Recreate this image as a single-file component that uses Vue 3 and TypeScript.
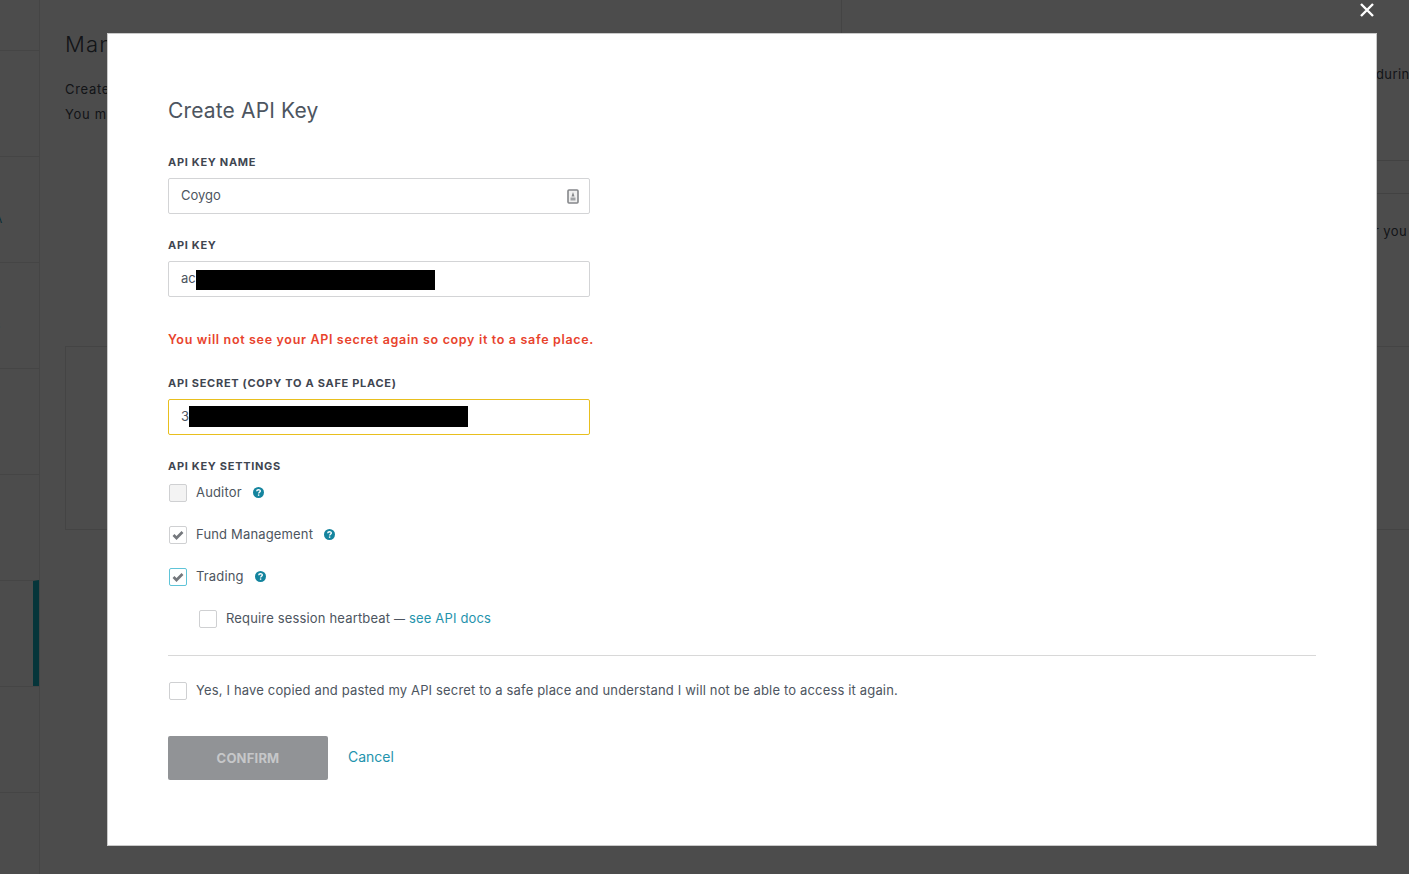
<script setup lang="ts">
const navRows: { id: number; text: string }[] = [
  { id: 1, text: '' },
  { id: 2, text: 'A' },
  { id: 3, text: 's' },
  { id: 4, text: '' },
  { id: 5, text: '' },
  { id: 6, text: '' },
  { id: 7, text: '' },
  { id: 8, text: '' },
];
interface Perm { label: string; checked: boolean; disabled?: boolean; focus?: boolean }
const perms: Perm[] = [
  { label: 'Auditor', checked: false, disabled: true },
  { label: 'Fund Management', checked: true },
  { label: 'Trading', checked: true, focus: true },
];
</script>

<template>
  <div class="page">
    <aside class="side">
      <div v-for="n in navRows" :key="n.id" class="side-row" :class="['row-' + n.id, { active: n.id === 6 }]">
        <span v-if="n.text" class="side-text">{{ n.text }}</span>
      </div>
    </aside>
    <main class="main">
      <h1 class="bg-title">Manage API Keys</h1>
      <p class="bg-line first">Create and manage API keys</p>
      <p class="bg-line">You may create several keys</p>
      <i class="bg-divider"></i>
      <span class="bg-right">during</span>
      <div class="bg-rules"><span class="bg-you">for you</span></div>
      <div class="bg-card"></div>
    </main>
  </div>

  <div class="overlay">
    <button class="close" aria-label="Close">
      <svg width="16" height="16" viewBox="0 0 16 16"><path d="M2 2 L14 14 M14 2 L2 14" stroke="#fff" stroke-width="2.4" fill="none" /></svg>
    </button>
    <section class="modal">
      <h2 class="title">Create API Key</h2>

      <label class="label">API KEY NAME</label>
      <div class="input">
        <span class="value">Coygo</span>
        <svg class="key-icon" width="12" height="15" viewBox="0 0 12 15">
          <rect x="1" y="1" width="10" height="13" rx="1" fill="#f0f0f0" stroke="#85878a" stroke-width="1.6" />
          <path d="M6 3 L7.5 7.5 H4.5 Z" fill="#85878a" />
          <rect x="3.5" y="8.5" width="5" height="3" fill="#a0a2a5" />
        </svg>
      </div>

      <label class="label second">API KEY</label>
      <div class="input">
        <span class="value">ac</span>
        <i class="redact redact-key"></i>
      </div>

      <p class="warning">You will not see your API secret again so copy it to a safe place.</p>

      <label class="label third">API SECRET (COPY TO A SAFE PLACE)</label>
      <div class="input secret">
        <span class="value">3</span>
        <i class="redact redact-secret"></i>
      </div>

      <label class="label fourth">API KEY SETTINGS</label>
      <div class="perms">
        <div v-for="p in perms" :key="p.label" class="check-row">
          <span class="box" :class="{ disabled: p.disabled, focus: p.focus }">
            <svg v-if="p.checked" width="12" height="10" viewBox="0 0 12 10"><path d="M1.5 5 L4.5 8 L10.5 2" stroke="#75787d" stroke-width="2.7" fill="none" /></svg>
          </span>
          <span class="check-text">{{ p.label }}</span>
          <svg class="help" width="11" height="11" viewBox="0 0 11 11">
            <circle cx="5.5" cy="5.5" r="5.5" fill="#14849e" />
            <path d="M3.7 4.2 C3.8 2.2 7.3 2.2 7.3 4.1 C7.3 5.3 5.6 5.3 5.6 6.6" stroke="#fff" stroke-width="1.4" fill="none" />
            <rect x="4.9" y="7.4" width="1.4" height="1.4" fill="#fff" />
          </svg>
        </div>
        <div class="check-row sub">
          <span class="box"></span>
          <span class="check-text">Require session heartbeat <span class="dash">—</span> <a class="link">see API docs</a></span>
        </div>
      </div>

      <hr class="sep" />

      <div class="check-row confirm-row">
        <span class="box"></span>
        <span class="check-text">Yes, I have copied and pasted my API secret to a safe place and understand I will not be able to access it again.</span>
      </div>

      <div class="actions">
        <button class="confirm">CONFIRM</button>
        <a class="link cancel">Cancel</a>
      </div>
    </section>
  </div>
</template>

<style>
html, body { margin: 0; height: 100%; overflow: hidden; }
</style>

<style scoped>
.page {
  display: flex;
  width: 1409px;
  height: 874px;
  overflow: hidden;
  background: #fff;
  font-family: Inter, "Liberation Sans", sans-serif;
  color: #3f4651;
}
.side {
  width: 39px;
  flex: none;
  padding-top: 50px;
  border-right: 1px solid #e8e8e8;
  overflow: hidden;
}
.side-row {
  height: 105px;
  border-top: 1px solid #e6e6e6;
  box-sizing: content-box;
}
.side-row.active { border-right: 6px solid #15b3c4; }
.side-text { display: block; margin-left: -6px; font-size: 12px; line-height: 14px; }
.row-2 .side-text { padding-top: 55px; color: #1f93ad; }
.row-3 .side-text { padding-top: 55px; }
.main { flex: 1; padding: 30px 0 0 25px; position: relative; }
.bg-title { margin: 0; font-size: 22px; line-height: 28px; font-weight: 300; letter-spacing: 1.2px; white-space: nowrap; }
.bg-line { margin: 0; font-size: 13px; line-height: 25px; white-space: nowrap; letter-spacing: 0.7px; }
.bg-line.first { margin-top: 19px; }
.bg-divider { position: absolute; left: 801px; top: 0; width: 1px; height: 40px; background: #e4e4e4; }
.bg-right { position: absolute; left: 1336px; top: 66px; font-size: 13px; letter-spacing: 0.4px; line-height: 16px; }
.bg-rules {
  position: absolute;
  left: 900px;
  right: 0;
  top: 160px;
  height: 32px;
  border-top: 1px solid #ddd;
  border-bottom: 1px solid #ddd;
}
.bg-you { position: absolute; right: 2px; top: 62px; font-size: 13px; letter-spacing: 0.4px; }
.bg-card {
  margin-top: 219px;
  height: 182px;
  border: 1px solid #e3e3e3;
  border-right: 0;
}
.overlay {
  position: fixed;
  inset: 0;
  background: rgba(0, 0, 0, 0.7);
  font-family: Inter, "Liberation Sans", sans-serif;
  color: #3f4651;
}
.close {
  position: absolute;
  left: 1359px;
  top: 2px;
  width: 16px;
  height: 16px;
  padding: 0;
  border: 0;
  background: none;
  display: flex;
}
.modal {
  position: absolute;
  left: 107px;
  top: 33px;
  width: 1270px;
  height: 813px;
  box-sizing: border-box;
  padding: 64px 60px 0 60px;
  background: #fff;
  border: 1px solid #c9c9c9;
}
.title {
  margin: 0;
  font-size: 21px;
  line-height: 26px;
  font-weight: 400;
  letter-spacing: 0.15px;
  color: #4d5560;
}
.label {
  display: block;
  margin-top: 31px;
  font-size: 11px;
  line-height: 14px;
  font-weight: 700;
  letter-spacing: 0.7px;
  color: #3f4651;
}
.label.second { margin-top: 24px; }
.label.third { margin-top: 28px; }
.label.fourth { margin-top: 24px; }
.input {
  position: relative;
  display: flex;
  align-items: center;
  justify-content: space-between;
  box-sizing: border-box;
  width: 422px;
  height: 36px;
  margin-top: 9px;
  padding: 0 10px 0 12px;
  border: 1px solid #d3d4d6;
  border-radius: 2px;
  font-size: 13px;
  color: #4d5560;
}
.input .value { margin-top: -2px; }
.input.secret { border-color: #e8bf1e; }
.redact { position: absolute; background: #000; }
.redact-key { left: 27px; top: 8px; width: 239px; height: 20px; }
.redact-secret { left: 20px; top: 6px; width: 279px; height: 21px; }
.warning {
  margin: 35px 0 0;
  font-size: 12.5px;
  line-height: 16px;
  font-weight: 600;
  letter-spacing: 0.67px;
  color: #e8432d;
}
.perms {
  display: flex;
  flex-direction: column;
  gap: 24px;
  margin-top: 11px;
}
.check-row {
  display: flex;
  align-items: center;
  height: 18px;
  padding-left: 1px;
  font-size: 13px;
  letter-spacing: 0.16px;
  color: #4d5560;
}
.check-row.sub { padding-left: 31px; }
.check-text { margin-top: -2px; }
.dash { font-size: 11px; }
.box {
  display: flex;
  align-items: center;
  justify-content: center;
  flex: none;
  box-sizing: border-box;
  width: 18px;
  height: 18px;
  margin-right: 9px;
  border: 1px solid #cfd0d2;
  border-radius: 2px;
  background: #fff;
}
.box.disabled { background: #f3f3f3; }
.box.focus { border-color: #5fc4d8; }
.help { margin: -2px 0 0 11px; }
.link { color: #1f93ad; }
.sep {
  margin: 27px 0 0;
  border: 0;
  border-top: 1px solid #d8d8d8;
}
.confirm-row { margin-top: 26px; }
.actions {
  display: flex;
  align-items: center;
  gap: 20px;
  margin-top: 36px;
}
.confirm {
  width: 160px;
  height: 44px;
  border: 0;
  border-radius: 2px;
  background: #919396;
  color: #c6c7c9;
  font-family: inherit;
  font-size: 13px;
  font-weight: 700;
  letter-spacing: 0.2px;
}
.cancel { font-size: 14px; margin-top: -4px; }
</style>
